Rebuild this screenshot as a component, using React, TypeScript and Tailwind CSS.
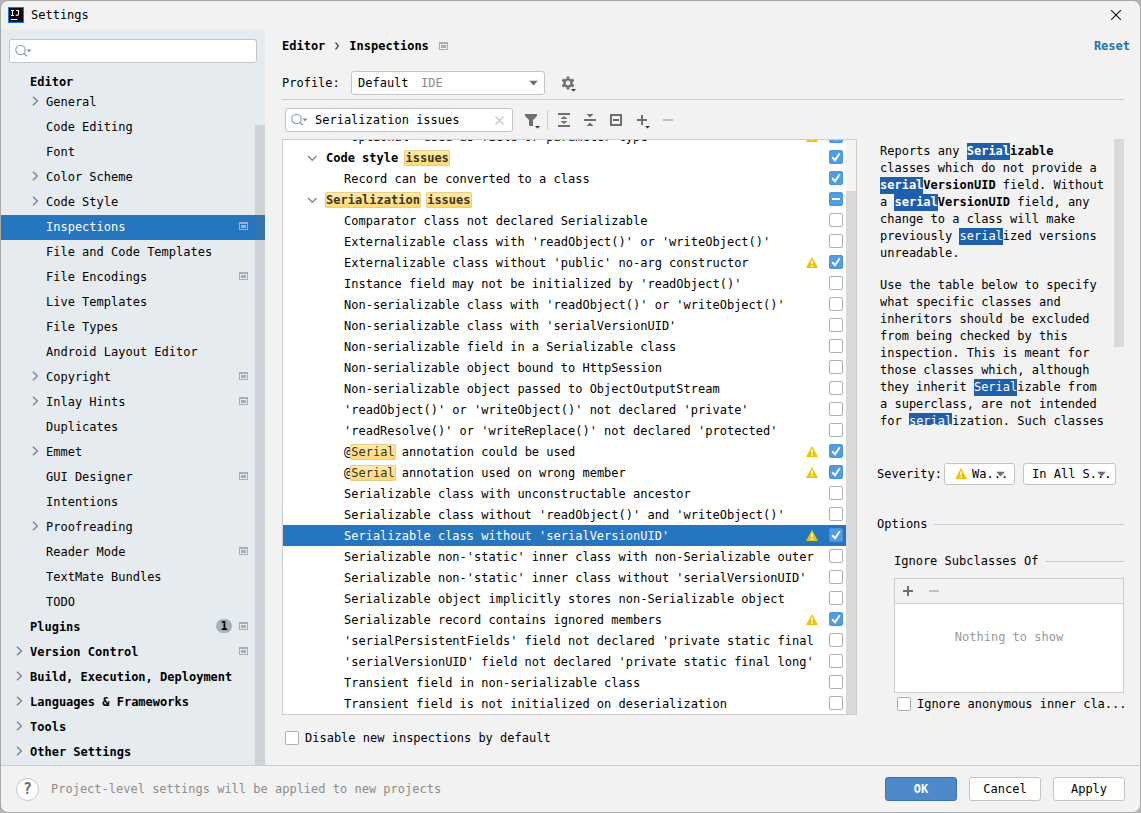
import { Fragment, useState } from 'react'
import type { ReactNode } from 'react'

type TreeItem = {
  label: string
  level: 0 | 1
  expandable?: boolean
  project?: boolean
  badge?: number
}

const treeItems: TreeItem[] = [
  { label: 'General', level: 1, expandable: true },
  { label: 'Code Editing', level: 1 },
  { label: 'Font', level: 1 },
  { label: 'Color Scheme', level: 1, expandable: true },
  { label: 'Code Style', level: 1, expandable: true },
  { label: 'Inspections', level: 1, project: true },
  { label: 'File and Code Templates', level: 1 },
  { label: 'File Encodings', level: 1, project: true },
  { label: 'Live Templates', level: 1 },
  { label: 'File Types', level: 1 },
  { label: 'Android Layout Editor', level: 1 },
  { label: 'Copyright', level: 1, expandable: true, project: true },
  { label: 'Inlay Hints', level: 1, expandable: true, project: true },
  { label: 'Duplicates', level: 1 },
  { label: 'Emmet', level: 1, expandable: true },
  { label: 'GUI Designer', level: 1, project: true },
  { label: 'Intentions', level: 1 },
  { label: 'Proofreading', level: 1, expandable: true },
  { label: 'Reader Mode', level: 1, project: true },
  { label: 'TextMate Bundles', level: 1 },
  { label: 'TODO', level: 1 },
  { label: 'Plugins', level: 0, project: true, badge: 1 },
  { label: 'Version Control', level: 0, expandable: true, project: true },
  { label: 'Build, Execution, Deployment', level: 0, expandable: true },
  { label: 'Languages & Frameworks', level: 0, expandable: true },
  { label: 'Tools', level: 0, expandable: true },
  { label: 'Other Settings', level: 0, expandable: true },
]

type Inspection = {
  // parts wrapped in [] are search matches
  text: string
  group?: boolean
  state?: 'on' | 'off' | 'mixed'
  warning?: boolean
}

const inspections: Inspection[] = [
  { text: "'Optional' used as field or parameter type", state: 'on', warning: true },
  { text: 'Code style [issues]', group: true, state: 'on' },
  { text: 'Record can be converted to a class', state: 'on' },
  { text: '[Serialization] [issues]', group: true, state: 'mixed' },
  { text: 'Comparator class not declared Serializable' },
  { text: "Externalizable class with 'readObject()' or 'writeObject()'" },
  { text: "Externalizable class without 'public' no-arg constructor", state: 'on', warning: true },
  { text: "Instance field may not be initialized by 'readObject()'" },
  { text: "Non-serializable class with 'readObject()' or 'writeObject()'" },
  { text: "Non-serializable class with 'serialVersionUID'" },
  { text: 'Non-serializable field in a Serializable class' },
  { text: 'Non-serializable object bound to HttpSession' },
  { text: 'Non-serializable object passed to ObjectOutputStream' },
  { text: "'readObject()' or 'writeObject()' not declared 'private'" },
  { text: "'readResolve()' or 'writeReplace()' not declared 'protected'" },
  { text: '@[Serial] annotation could be used', state: 'on', warning: true },
  { text: '@[Serial] annotation used on wrong member', state: 'on', warning: true },
  { text: 'Serializable class with unconstructable ancestor' },
  { text: "Serializable class without 'readObject()' and 'writeObject()'" },
  { text: "Serializable class without 'serialVersionUID'", state: 'on', warning: true },
  { text: "Serializable non-'static' inner class with non-Serializable outer" },
  { text: "Serializable non-'static' inner class without 'serialVersionUID'" },
  { text: 'Serializable object implicitly stores non-Serializable object' },
  { text: 'Serializable record contains ignored members', state: 'on', warning: true },
  { text: "'serialPersistentFields' field not declared 'private static final" },
  { text: "'serialVersionUID' field not declared 'private static final long'" },
  { text: 'Transient field in non-serializable class' },
  { text: 'Transient field is not initialized on deserialization' },
]

function Chevron({ open }: { open?: boolean }) {
  return (
    <svg width="16" height="16" viewBox="0 0 16 16" fill="none" stroke="#7f8b91" strokeWidth="1.5" className="shrink-0">
      {open ? <path d="M4 6l4.300 4.300L12.600 6" /> : <path d="M6 3.700L10.300 8 6 12.300" />}
    </svg>
  )
}

function ProjectIcon() {
  return (
    <svg width="9" height="8" viewBox="0 0 9 8" className="shrink-0">
      <path d="M0 0h9v8H0zM1 2v5h7V2z" fill="#a3b0b8" fillRule="evenodd" />
      <rect x="2" y="3" width="5" height="3" fill="#a3b0b8" />
    </svg>
  )
}

function WarningIcon() {
  return (
    <svg width="12" height="11" viewBox="0 0 12 11" className="shrink-0">
      <path d="M6 0l6 11H0z" fill="#ebc700" />
      <path d="M5.200 3.600h1.600v3.400H5.200zM5.200 8h1.600v1.500H5.200z" fill="#fff" />
    </svg>
  )
}

function SearchIcon() {
  return (
    <svg width="17" height="14" viewBox="0 0 17 14" fill="none" className="shrink-0">
      <circle cx="5.5" cy="6" r="4.7" stroke="#9aa7b0" strokeWidth="1.3" />
      <path d="M8.800 9.300l3 3" stroke="#9aa7b0" strokeWidth="1.6" />
      <path d="M11.500 5.500h5l-2.500 2.700z" fill="#7f8b91" />
    </svg>
  )
}

function DropArrow({ compact }: { compact?: boolean }) {
  return (
    <svg
      width="9"
      height="5"
      viewBox="0 0 9 5"
      className={`pointer-events-none absolute top-1/2 -translate-y-1/2 ${compact ? 'right-[10px]' : 'right-[7px]'}`}
    >
      <path d="M0 0h9L4.500 5z" fill="#6e6e6e" />
    </svg>
  )
}

function Checkbox({ id, state = 'off' }: { id: string; state?: 'on' | 'off' | 'mixed' }) {
  return (
    <span className="relative block size-[14px] shrink-0">
      <input
        id={id}
        type="checkbox"
        defaultChecked={state !== 'off'}
        className="peer block size-[14px] appearance-none rounded-[2px] border border-[#b0b0b0] bg-white checked:border-[#4a94dc] checked:bg-[#4f9ee3]"
      />
      <svg
        width="14"
        height="14"
        viewBox="0 0 14 14"
        fill="none"
        stroke="#fff"
        strokeWidth="2"
        className="pointer-events-none absolute inset-0 hidden peer-checked:block"
      >
        {state === 'mixed' ? <path d="M3 7h8" /> : <path d="M3.200 7.200l2.800 3 4.800-7" />}
      </svg>
    </span>
  )
}

function Highlighted({ text }: { text: string }) {
  return (
    <>
      {text.split(/(\[[^\]]+\])/).map((part, i) =>
        part.startsWith('[') ? (
          <mark
            key={i}
            className="-mx-px rounded-[2px] bg-linear-to-b from-[#feebae] to-[#fed970] p-px text-[#3a3523] outline -outline-offset-1 outline-[#e6cf8c]"
          >
            {part.slice(1, -1)}
          </mark>
        ) : (
          <Fragment key={i}>{part}</Fragment>
        ),
      )}
    </>
  )
}

function Match({ children }: { children: ReactNode }) {
  return <mark className="inline-block bg-[#1f5fa9] text-white">{children}</mark>
}

function Sidebar() {
  const [selected, setSelected] = useState('Inspections')

  return (
    <nav aria-label="Settings" className="flex w-[264px] shrink-0 flex-col bg-[#e6ebf0]">
      <div className="px-2 pt-[10px]">
        <label className="flex h-6 items-center rounded-[3px] border border-[#c4c4c4] bg-white pl-[5px]">
          <SearchIcon />
          <input aria-label="Search settings" className="min-w-0 flex-1 px-2 outline-none" />
        </label>
      </div>
      <div className="mt-[11px] h-4 shrink-0 pl-[29px] font-bold">Editor</div>
      <div className="relative flex min-h-0 flex-1 flex-col justify-end overflow-hidden">
        <ul>
          {treeItems.map((item) => (
            <li key={item.label}>
              <button
                type="button"
                onClick={() => setSelected(item.label)}
                className={`flex h-[25px] w-full items-center gap-[3px] pb-[3px] pr-[17px] text-left ${
                  item.level === 0 ? 'pl-[10px] font-bold' : 'pl-[26px]'
                } ${selected === item.label ? 'bg-[#2675bf] text-white' : ''}`}
              >
                {item.expandable ? <Chevron /> : <span className="w-4 shrink-0" />}
                <span className="flex-1 whitespace-nowrap pt-[2px]">{item.label}</span>
                {item.badge && (
                  <span className="mr-1 h-[14px] w-4 rounded-full bg-[#a3b1b9] text-center leading-[14px]">
                    {item.badge}
                  </span>
                )}
                {item.project && <ProjectIcon />}
              </button>
            </li>
          ))}
        </ul>
        <div className="absolute bottom-0 right-0 top-[35px] w-[10px] bg-[#737373]/20" />
      </div>
    </nav>
  )
}

function ToolButton({ label, children }: { label: string; children: ReactNode }) {
  return (
    <button type="button" aria-label={label} className="flex size-[26px] shrink-0 items-center justify-center">
      <svg width="20" height="20" viewBox="0 0 20 20" fill="#6e6e6e">
        {children}
      </svg>
    </button>
  )
}

function Toolbar() {
  return (
    <div className="flex h-[39px] shrink-0 items-center pl-[3px] pt-px">
      <div className="flex h-6 w-[228px] items-center rounded-[3px] border border-[#c4c4c4] bg-white pl-[5px] pr-2">
        <SearchIcon />
        <input
          aria-label="Search inspections"
          defaultValue="Serialization issues"
          className="ml-[7px] min-w-0 flex-1 outline-none"
        />
        <button type="button" aria-label="Clear search">
          <svg width="9" height="9" viewBox="0 0 9 9" stroke="#c0c5c9" strokeWidth="1.2">
            <path d="M.5.5l8 8M8.500.5l-8 8" />
          </svg>
        </button>
      </div>
      <span className="w-[6px]" />
      <ToolButton label="Filter inspections">
        <path d="M3 4h12v2l-4 4v6H7v-6L3 6z" />
        <path d="M13 16h5l-2.500 2.500z" fill="#333" />
      </ToolButton>
      <span className="ml-[2px] mr-[3px] h-5 w-px bg-[#cdcdcd]" />
      <ToolButton label="Expand all">
        <path d="M4 3h12v2H4zM4 15h12v2H4zM10 6l3.500 3h-7zM10 14l3.500-3h-7z" />
      </ToolButton>
      <ToolButton label="Collapse all">
        <path d="M4 9h12v2H4zM10 7.500L13.500 4h-7zM10 12.500l3.500 3.500h-7z" />
      </ToolButton>
      <ToolButton label="Reset to empty">
        <path d="M4 4h12v12H4zM6 6v8h8V6z" fillRule="evenodd" />
        <path d="M7 9h6v2H7z" />
      </ToolButton>
      <ToolButton label="Add inspection">
        <path d="M9 5h2v4h4v2h-4v4H9v-4H5V9h4z" />
        <path d="M13 16h5l-2.500 2.500z" fill="#333" />
      </ToolButton>
      <ToolButton label="Remove inspection">
        <path d="M5 9h10v2H5z" fill="#c0c0c0" />
      </ToolButton>
    </div>
  )
}

function InspectionList() {
  const [selected, setSelected] = useState(19)

  return (
    <div className="relative flex min-w-0 flex-1 flex-col justify-end overflow-hidden border border-[#cdcdcd] bg-white">
      <ul>
        {inspections.map((item, i) => (
          <li
            key={item.text}
            onClick={() => setSelected(i)}
            className={`flex h-[21px] items-center pb-px pr-[13px] ${selected === i ? 'bg-[#2675bf] text-white' : ''}`}
          >
            <label
              htmlFor={`inspection-${i}`}
              className={`flex min-w-0 flex-1 items-center whitespace-pre pt-[2px] ${
                item.group ? 'gap-[6px] pl-[21px] font-bold' : 'pl-[61px]'
              }`}
            >
              {item.group && <Chevron open />}
              <span>
                <Highlighted text={item.text} />
              </span>
            </label>
            {item.warning && (
              <span className="mr-[11px]">
                <WarningIcon />
              </span>
            )}
            <Checkbox id={`inspection-${i}`} state={item.state} />
          </li>
        ))}
      </ul>
      <div className="absolute inset-y-0 right-0 w-[10px] bg-[#f4f4f4]" />
      <div className="absolute bottom-0 right-0 top-[51px] w-[10px] bg-[#d9d9d9]" />
    </div>
  )
}

function Description() {
  return (
    <div className="relative min-h-0 flex-1 overflow-hidden pl-[3px] pr-5 pt-1 leading-[17px]">
      <p>
        Reports any{' '}
        <b>
          <Match>Serial</Match>izable
        </b>{' '}
        classes which do not provide a{' '}
        <b>
          <Match>serial</Match>VersionUID
        </b>{' '}
        field. Without a{' '}
        <b>
          <Match>serial</Match>VersionUID
        </b>{' '}
        field, any change to a class will make previously <Match>serial</Match>ized versions unreadable.
      </p>
      <p className="mt-[15px]">
        Use the table below to specify what specific classes and inheritors should be excluded from being checked by
        this inspection. This is meant for those classes which, although they inherit <Match>Serial</Match>izable from a
        superclass, are not intended for <Match>serial</Match>ization. Such classes
      </p>
      <div className="absolute right-0 top-0 h-[208px] w-[10px] bg-[#d9d9d9]" />
    </div>
  )
}

function GroupTitle({ children }: { children: ReactNode }) {
  return (
    <div className="flex h-4 items-center gap-[6px]">
      <h3>{children}</h3>
      <span className="h-px flex-1 bg-[#cdcdcd]" />
    </div>
  )
}

function Details() {
  return (
    <aside className="flex w-[247px] shrink-0 flex-col">
      <Description />
      <div className="mt-[38px] flex h-[22px] items-center">
        <label htmlFor="severity">Severity:</label>
        <span className="relative ml-[2px] flex">
          <span className="pointer-events-none absolute left-[11px] top-[5px]">
            <WarningIcon />
          </span>
          <select
            id="severity"
            className="h-[22px] w-[71px] appearance-none rounded-[3px] border border-[#c4c4c4] bg-white pl-[27px]"
          >
            <option>Wa...</option>
          </select>
          <DropArrow compact />
        </span>
        <span className="relative ml-2 flex">
          <select
            aria-label="Scope"
            className="h-[22px] w-[93px] appearance-none rounded-[3px] border border-[#c4c4c4] bg-white pl-2"
          >
            <option>In All S...</option>
          </select>
          <DropArrow compact />
        </span>
      </div>
      <div className="mt-[31px]">
        <GroupTitle>Options</GroupTitle>
      </div>
      <div className="mt-[21px] pl-[17px]">
        <GroupTitle>Ignore Subclasses Of</GroupTitle>
        <div className="mt-[9px] border border-[#cdcdcd]">
          <div className="flex h-[25px] items-center border-b border-[#cdcdcd]">
            <ToolButton label="Add class">
              <path d="M9 5h2v4h4v2h-4v4H9v-4H5V9h4z" />
            </ToolButton>
            <ToolButton label="Remove class">
              <path d="M5 9h10v2H5z" fill="#c0c0c0" />
            </ToolButton>
          </div>
          <div className="h-[88px] bg-white pt-[25px] text-center leading-[17px] text-[#999]">Nothing to show</div>
        </div>
        <div className="flex h-[22px] items-center gap-[6px] pl-[3px]">
          <Checkbox id="ignore-anonymous" />
          <label htmlFor="ignore-anonymous" className="whitespace-nowrap">
            Ignore anonymous inner cla...
          </label>
        </div>
      </div>
    </aside>
  )
}

export default function App() {
  return (
    <div className="h-screen bg-[#b4b4b6] font-['DejaVu_Sans_Mono',monospace] text-[12px] leading-4 text-black">
      <div className="flex h-full flex-col overflow-hidden rounded-lg border border-[#a8a8a8] bg-[#f2f2f2]">
        <header className="flex h-7 shrink-0 items-center pl-[7px] pr-[19px]">
          <svg width="16" height="16" viewBox="0 0 16 16">
            <rect width="16" height="16" fill="#087cfa" />
            <rect x="1" y="1" width="14" height="14" fill="#0a0a0a" />
            <path
              d="M3 3.500h3M4.500 3.500v4.500M3 8.500h3M8 3.500h2.500v3.500c0 1.400-1.500 1.700-2.700 1"
              stroke="#fff"
              strokeWidth="1.1"
              fill="none"
            />
            <rect x="3" y="12" width="6" height="1" fill="#fff" />
          </svg>
          <h1 className="ml-[7px] flex-1">Settings</h1>
          <button type="button" aria-label="Close">
            <svg width="10" height="10" viewBox="0 0 10 10" stroke="#111" strokeWidth="1.1">
              <path d="M0 0l10 10M10 0L0 10" />
            </svg>
          </button>
        </header>

        <div className="flex min-h-0 flex-1">
          <Sidebar />
          <main className="flex min-w-0 flex-1 flex-col pl-[17px]">
            <div className="flex h-8 shrink-0 items-center pr-[10px] pt-[2px]">
              <h2 className="flex items-center font-bold">
                <span>Editor</span>
                <svg width="4" height="8" viewBox="0 0 4 8" fill="none" stroke="#222" strokeWidth="1.2" className="mx-[10px]">
                  <path d="M.5.5L3.300 4 .5 7.500" />
                </svg>
                <span>Inspections</span>
              </h2>
              <span className="ml-[10px] flex-1">
                <ProjectIcon />
              </span>
              <a href="#reset" className="font-bold text-[#2470b3]">
                Reset
              </a>
            </div>

            <div className="mr-4 flex h-[39px] shrink-0 items-center border-b border-[#cdcdcd] pt-[5px]">
              <label htmlFor="profile" className="w-[69px]">
                Profile:
              </label>
              <span className="relative flex">
                <select
                  id="profile"
                  className="h-6 w-[194px] appearance-none rounded-[3px] border border-[#c4c4c4] bg-white pl-[6px]"
                >
                  <option>Default</option>
                </select>
                <span className="pointer-events-none absolute left-[70px] top-1 text-[#8c8c8c]">IDE</span>
                <DropArrow />
              </span>
              <span className="w-[10px]" />
              <ToolButton label="Profile actions">
                <g fill="none" stroke="#6e6e6e">
                  <circle cx="10" cy="10" r="3.6" strokeWidth="2.4" />
                  <path
                    d="M10 3.500v2M10 14.500v2M4.400 6.800l1.700 1M13.900 12.200l1.700 1M4.400 13.200l1.700-1M13.900 7.800l1.700-1"
                    strokeWidth="2.8"
                  />
                </g>
                <path d="M13 16h5l-2.500 2.500z" fill="#333" />
              </ToolButton>
            </div>

            <Toolbar />

            <div className="mr-4 flex min-h-0 flex-1 gap-5">
              <InspectionList />
              <Details />
            </div>

            <div className="flex h-[50px] shrink-0 items-center gap-[6px] pb-1 pl-[3px]">
              <Checkbox id="disable-new" />
              <label htmlFor="disable-new">Disable new inspections by default</label>
            </div>
          </main>
        </div>

        <footer className="flex h-[47px] shrink-0 items-center gap-3 border-t border-[#cdcdcd] px-[15px]">
          <button
            type="button"
            aria-label="Help"
            className="flex size-[23px] items-center justify-center rounded-full border border-[#c4c4c4] bg-white text-[15px] font-bold text-[#6e6e6e]"
          >
            ?
          </button>
          <p className="flex-1 text-[#8c8c8c]">Project-level settings will be applied to new projects</p>
          <button type="button" className="h-6 w-[72px] rounded-[3px] border border-[#3d75b0] bg-[#4e8ac9] font-bold text-white">
            OK
          </button>
          <button type="button" className="h-6 w-[72px] rounded-[3px] border border-[#c4c4c4] bg-white">
            Cancel
          </button>
          <button type="button" className="h-6 w-[72px] rounded-[3px] border border-[#c4c4c4] bg-white">
            Apply
          </button>
        </footer>
      </div>
    </div>
  )
}
